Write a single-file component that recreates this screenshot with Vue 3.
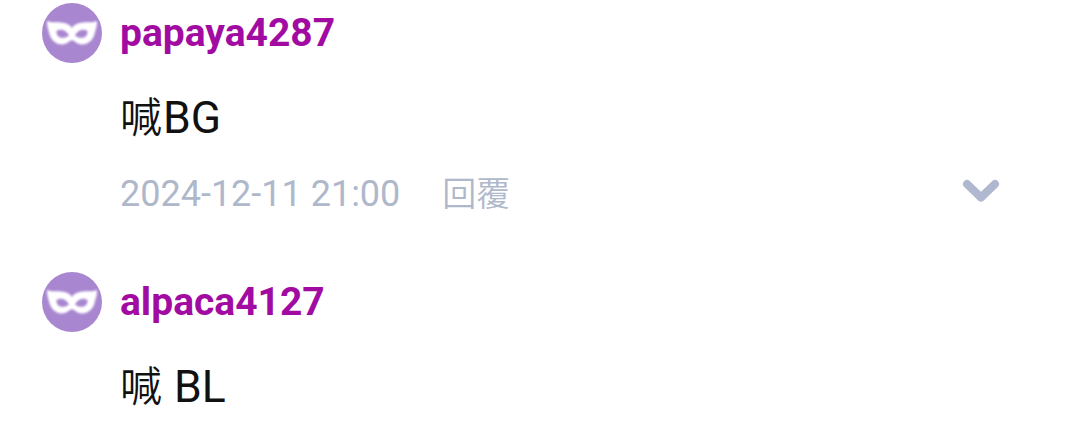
<script setup>
import { ref } from 'vue';

// 留言列表
const comments = ref([
  { id: 1, name: 'papaya4287', content: '喊BG', time: '2024-12-11 21:00' },
  { id: 2, name: 'alpaca4127', content: '喊 BL', time: '' }
]);

// 將留言拆成中文與英文片段，分別套用字型樣式
const splitText = (text) => {
  return text.split(/([\u4e00-\u9fff]+)/).filter(Boolean).map((part) => ({
    text: part,
    cjk: /[\u4e00-\u9fff]/.test(part)
  }));
};
</script>


<template>
  <div class="comment-list">
    <div v-for="comment in comments" :key="comment.id" class="comment">
      <svg class="avatar" viewBox="0 0 60 60">
        <circle cx="30" cy="30" r="30" fill="#a987d0" />
        <path
          class="mask"
          fill-rule="evenodd"
          d="M5 18 C10 20 14 19 19 19.5 C24 20 28 21.5 30 25 C32 21.5 36 20 41 19.5 C46 19 50 20 55 18 C55 24 53.500 27 52.500 31 C51 37 46 41.500 40 41.500 C35.500 41.500 33 38 30 37 C27 38 24.500 41.500 20 41.500 C14 41.500 9 37 7.500 31 C6.500 27 5 24 5 18 Z M14.500 28 C14 35.500 22 36.500 27 32.500 C24.500 27 18.500 25.500 14.500 28 Z M45.500 28 C46 35.500 38 36.500 33 32.500 C35.500 27 41.500 25.500 45.500 28 Z"
        />
      </svg>

      <div class="comment-body">
        <div class="name">{{ comment.name }}</div>
        <div class="content">
          <span v-for="(part, index) in splitText(comment.content)" :key="index" :class="{ cjk: part.cjk }">{{ part.text }}</span>
        </div>
        <div v-if="comment.time" class="meta">
          <span class="time">{{ comment.time }}</span>
          <span class="reply">回覆</span>
          <svg class="arrow" viewBox="0 0 38 24">
            <path d="M5 5 L19 18.5 L33 5" />
          </svg>
        </div>
      </div>
    </div>
  </div>
</template>


<style>
body {
  background-color: #fff;
}
</style>

<style scoped>
.comment-list {
  height: 436px;
  padding: 3px 80px 0 42px;
  box-sizing: border-box;
  overflow: hidden;
  font-family: Roboto, "Noto Sans CJK TC", sans-serif;
}
.comment {
  display: flex;
  gap: 18px;
  height: 269px;
}
.avatar {
  flex: none;
  width: 60px;
  height: 60px;
}
.mask {
  fill: #fff;
  filter: blur(1px);
}
.comment-body {
  flex: 1;
}
.name {
  height: 60px;
  line-height: 60px;
  font-size: 39px;
  font-weight: bold;
  color: #a20ba2;
}
.content {
  margin-top: 25px;
  height: 60px;
  line-height: 60px;
  font-size: 44.5px;
  color: #111;
}
.cjk {
  font-family: "Noto Sans CJK TC", sans-serif;
  font-size: 42px;
  font-weight: 350;
  letter-spacing: 1px;
  line-height: 1;
}
.meta {
  display: flex;
  align-items: center;
  margin-top: 16px;
  height: 60px;
  line-height: 60px;
  font-size: 36px;
  color: #afb8cb;
}
.reply {
  margin-left: 42px;
  font-size: 34px;
  font-weight: 350;
}
.arrow {
  width: 38px;
  height: 24px;
  margin: -6px 0 0 auto;
}
.arrow path {
  fill: none;
  stroke: #afb8cf;
  stroke-width: 8;
  stroke-linecap: round;
  stroke-linejoin: round;
}
</style>
